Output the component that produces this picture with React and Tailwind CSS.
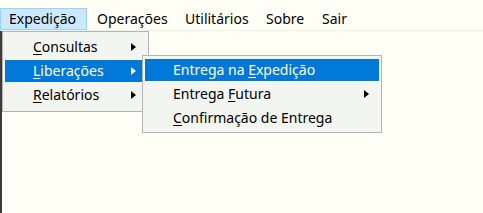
import React from 'react';

const font = { fontFamily: '"Segoe UI", "Noto Sans", "Open Sans", sans-serif' };

const Mnemonic = ({ text, at }) => {
  if (at < 0) return <span>{text}</span>;
  return (
    <span>
      {text.slice(0, at)}
      <span className="underline underline-offset-2">{text[at]}</span>
      {text.slice(at + 1)}
    </span>
  );
};

const Arrow = ({ white }) => (
  <svg width="5" height="8" viewBox="0 0 5 8" className="shrink-0">
    <path d="M0 0 L5 4 L0 8 Z" fill={white ? '#ffffff' : '#000000'} />
  </svg>
);

const MenuItem = ({ label, at, active, sub }) => (
  <div
    className={`flex items-center h-[22px] pl-[28px] pr-[10px] mb-[2px] ${
      active ? 'bg-[#0078d7] text-white' : 'text-black'
    }`}
  >
    <span className="flex-1 text-[14px] leading-none whitespace-nowrap">
      <Mnemonic text={label} at={at} />
    </span>
    {sub && <Arrow white={active} />}
  </div>
);

const topItems = [
  { t: 'Expedição', w: 'w-[87px] pl-[8px] bg-[#cce8ff] border border-[#99d1ff]' },
  { t: 'Operações', w: 'w-[93px] pl-[10px]' },
  { t: 'Utilitários', w: 'w-[81px] pl-[5px]' },
  { t: 'Sobre', w: 'w-[56px] pl-[5px]' },
  { t: 'Sair', w: 'w-[40px] pl-[5px]' },
];

export default function App() {
  return (
    <div className="w-[483px] h-[213px] bg-[#fffff6] relative overflow-hidden" style={font}>
      <div className="h-[8px]" />
      <div className="flex items-stretch h-[23px] border-b border-[#f0f2ea]">
        {topItems.map(({ t, w }) => (
          <div key={t} className={`flex items-center text-[14px] leading-none text-black whitespace-nowrap ${w}`}>
            {t}
          </div>
        ))}
      </div>
      <div className="absolute left-0 top-[31px] bottom-0 w-[2px] bg-[#3c3c3c]" />

      <div className="absolute left-[2px] top-[31px] w-[147px] bg-[#f3f6f0] border border-[#b4b4b4] p-[2px] pt-[4px] pb-[3px]">
        <MenuItem label="Consultas" at={0} sub />
        <MenuItem label="Liberações" at={0} sub active />
        <MenuItem label="Relatórios" at={0} sub />
      </div>

      <div className="absolute left-[142px] top-[55px] w-[240px] bg-[#f3f6f0] border border-[#b4b4b4] p-[2px] pt-[3px] pb-[1px]">
        <MenuItem label="Entrega na Expedição" at={11} active />
        <MenuItem label="Entrega Futura" at={8} sub />
        <MenuItem label="Confirmação de Entrega" at={0} />
      </div>
    </div>
  );
}
